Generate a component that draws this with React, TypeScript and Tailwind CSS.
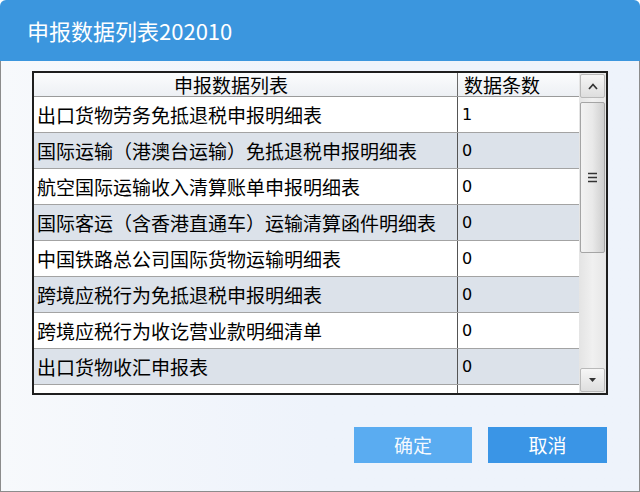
const rows = [
  { name: "出口货物劳务免抵退税申报明细表", count: "1" },
  { name: "国际运输（港澳台运输）免抵退税申报明细表", count: "0" },
  { name: "航空国际运输收入清算账单申报明细表", count: "0" },
  { name: "国际客运（含香港直通车）运输清算函件明细表", count: "0" },
  { name: "中国铁路总公司国际货物运输明细表", count: "0" },
  { name: "跨境应税行为免抵退税申报明细表", count: "0" },
  { name: "跨境应税行为收讫营业款明细清单", count: "0" },
  { name: "出口货物收汇申报表", count: "0" },
  { name: "", count: "" },
];

const cjk = "font-['Microsoft_YaHei','Noto_Sans_CJK_SC',sans-serif]";

function ScrollBar() {
  return (
    <div className="flex w-[27px] flex-col bg-gradient-to-r from-[#e4e4e4] via-[#f0f0f0] to-[#e6e6e6] px-[1px] py-[1px]">
      <div className="flex h-[24px] items-center justify-center rounded-[2px] border border-[#b9b9b9] bg-gradient-to-b from-[#f6f6f6] to-[#dedede]">
        <svg width="10" height="7" viewBox="0 0 10 7">
          <path d="M1 6 L5 1.5 L9 6" fill="none" stroke="#333" strokeWidth="1.7" />
        </svg>
      </div>
      <div className="mt-[4px] flex h-[151px] items-center justify-center rounded-[2px] border border-[#a5a5a5] bg-gradient-to-r from-[#f3f3f3] via-[#e9e9e9] to-[#cfcfcf]">
        <svg width="9" height="11" viewBox="0 0 9 11">
          <path d="M0 1.5 H9 M0 5.5 H9 M0 9.5 H9" stroke="#333" strokeWidth="1.4" />
        </svg>
      </div>
      <div className="flex-1" />
      <div className="flex h-[24px] items-center justify-center rounded-[2px] border border-[#b9b9b9] bg-gradient-to-b from-[#f6f6f6] to-[#dedede]">
        <svg width="9" height="6" viewBox="0 0 9 6">
          <path d="M1 1 H8 L4.5 5 Z" fill="#333" />
        </svg>
      </div>
    </div>
  );
}

export default function App() {
  return (
    <div className={`flex h-[492px] w-[640px] flex-col ${cjk}`}>
      <div className="flex h-[61px] items-center rounded-t-[6px] bg-[#3b96de] pl-[27px] text-[22px] text-white">
        申报数据列表202010
      </div>

      <div className="flex flex-1 flex-col border-x border-b border-[#8c8c8c] bg-gradient-to-r from-[#f7f9fc] via-[#eef3fb] to-[#eef3fb] pl-[31px] pr-[32px] pt-[10px]">
        <div className="flex h-[324px] w-[576px] overflow-hidden border-2 border-[#1e1e1e] bg-white">
          <div className="flex flex-1 flex-col text-[19px] text-black">
            <div className="flex h-[24px] shrink-0 border-b border-[#9a9a9a] bg-gradient-to-b from-[#fbfcfd] to-[#edf0f4] leading-[24px]">
              <div className="w-[423px] pl-[140px]">申报数据列表</div>
              <div className="flex-1 border-l border-[#6a6a6a] pl-[6px]">数据条数</div>
            </div>
            {rows.map((r, i) => (
              <div
                key={i}
                className={`flex h-[36px] shrink-0 border-b border-[#a3a3a3] leading-[35px] ${
                  i % 2 === 1 ? "bg-[#dce2ea]" : "bg-white"
                }`}
              >
                <div className="w-[423px] overflow-hidden whitespace-nowrap pl-[3px]">{r.name}</div>
                <div className="flex-1 border-l border-[#555] pl-[4px] font-['DejaVu_Sans',sans-serif] text-[16px]">
                  {r.count}
                </div>
              </div>
            ))}
          </div>
          <ScrollBar />
        </div>

        <div className="mt-[32px] flex justify-end gap-[16px]">
          <button className="h-[36px] w-[118px] bg-[#5aacf1] text-[19px] text-white/95">确定</button>
          <button className="h-[36px] w-[119px] bg-[#3a95e6] text-[19px] text-white">取消</button>
        </div>
      </div>
    </div>
  );
}
